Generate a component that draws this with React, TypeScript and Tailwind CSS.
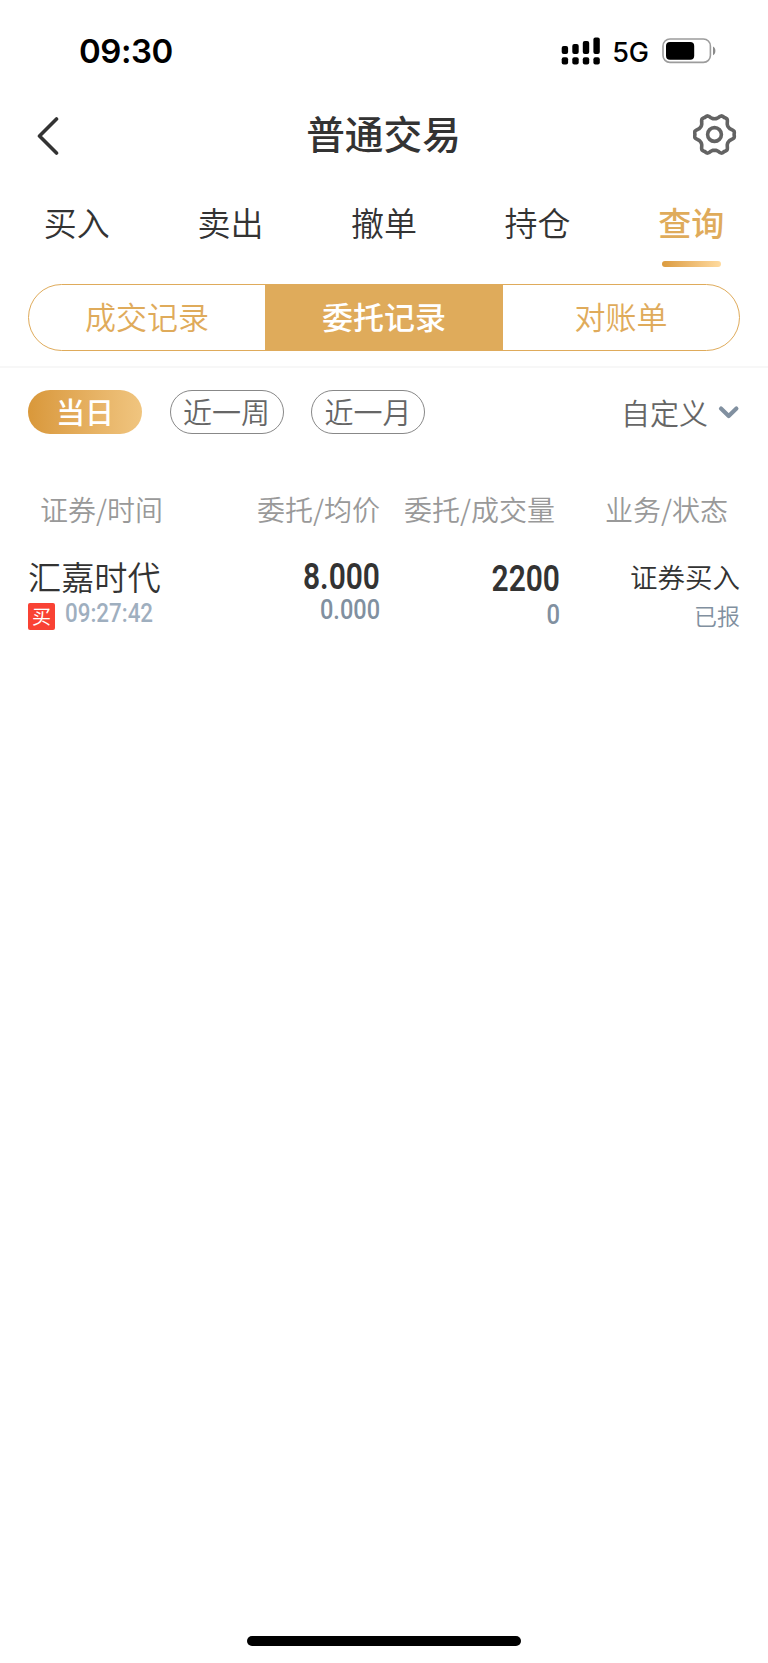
import clsx from 'clsx';

const tabs = ['买入', '卖出', '撤单', '持仓', '查询'];
const segments = ['成交记录', '委托记录', '对账单'];
const ranges = ['当日', '近一周', '近一月'];

// Half a lobe of the settings icon as [degrees, radius], mirrored six times
const lobe = [[0, 19.6], [5, 19.9], [9, 19.9], [12, 19.2], [15, 18.2], [18, 17.2], [21, 16.4], [25, 15.9], [30, 15.7]];
const fullLobe = [...lobe.slice(1, -1).reverse().map(([deg, r]) => [-deg, r]), ...lobe];
const gearPoints = [0, 60, 120, 180, 240, 300]
  .flatMap((base) =>
    fullLobe.map(([deg, r]) => {
      const angle = ((base + deg) * Math.PI) / 180;
      return `${(r * Math.cos(angle)).toFixed(2)},${(r * Math.sin(angle)).toFixed(2)}`;
    })
  )
  .join(' ');

const GearIcon = () => (
  <svg width="44" height="44" viewBox="-21.5 -21.5 44 44" fill="none" stroke="#636363" strokeWidth="3.6">
    <polygon points={gearPoints} strokeLinejoin="round" />
    <circle r="6.9" />
  </svg>
);

const SignalIcon = () => (
  <svg width="40" height="28" viewBox="0 0 40 28">
    <rect x="0.7" y="9" width="6.4" height="8" rx="2" />
    <rect x="11.3" y="7" width="6.4" height="10" rx="2" />
    <rect x="21.8" y="4" width="6.4" height="13" rx="2" />
    <rect x="32.4" y="0.6" width="6.4" height="16.4" rx="2" />
    <rect x="0.7" y="20.2" width="6.4" height="7.2" rx="2" />
    <rect x="11.3" y="20.2" width="6.4" height="7.2" rx="2" />
    <rect x="21.8" y="20.2" width="6.4" height="7.2" rx="2" />
    <rect x="32.4" y="20.2" width="6.4" height="7.2" rx="2" />
  </svg>
);

const BatteryIcon = () => (
  <svg width="56" height="26" viewBox="0 0 56 26">
    <rect x="1" y="1" width="47.4" height="23.4" rx="7" fill="none" stroke="#9c9c9c" strokeWidth="1.6" />
    <rect x="4" y="4" width="28.2" height="17.8" rx="4" />
    <path d="M51 8.6c3.2 1.2 3.2 7.4 0 8.6z" fill="#8a8a8a" />
  </svg>
);

const StatusBar = () => (
  <div className="flex h-[100px] justify-between pl-[79px] pr-[50px] pt-[37px] font-['Inter'] text-black">
    <div className="h-7 text-[33px] font-semibold leading-7 tracking-[-0.5px]">09:30</div>
    <div className="flex h-7">
      <SignalIcon />
      <span className="mr-[13px] pl-[11px] pt-px text-[27px] font-medium leading-[30px]">5G</span>
      <div className="pt-px">
        <BatteryIcon />
      </div>
    </div>
  </div>
);

const Header = () => (
  <header className="flex h-[70px] items-center justify-between pl-[37px] pr-[31px] pt-px">
    <svg width="38" height="40" viewBox="0 0 38 40" fill="none" stroke="#333" strokeWidth="3.6" strokeLinecap="round" strokeLinejoin="round">
      <path d="M19.5 3 2.5 20l17 17" />
    </svg>
    <h1 className="pb-[8px] pr-px text-[38.7px] font-medium leading-[60px] text-[#333]">普通交易</h1>
    <div className="pb-px">
      <GearIcon />
    </div>
  </header>
);

const Tabs = () => (
  <nav className="grid h-[114px] grid-cols-5 pt-[27px] text-center text-[33px] leading-[50px] text-[#333]">
    {tabs.map((tab) => (
      <div key={tab} className={clsx(tab === '查询' ? 'font-medium text-[#dfab5b]' : 'font-[350]')}>
        {tab}
        {tab === '查询' && (
          <div className="mx-auto mt-[14px] h-1.5 w-[59px] rounded-full bg-linear-to-r from-[#db9b3d] to-[#ffdb9f]" />
        )}
      </div>
    ))}
  </nav>
);

const Segments = () => (
  <div className="mx-7 grid h-[67px] grid-cols-[236px_238px_236px] overflow-hidden rounded-full border border-[#dfab5b] text-center text-[31px] leading-[62px] text-[#dfab5b]">
    {segments.map((segment, i) => (
      <div key={segment} className={clsx(i === 1 ? 'bg-[#dfab5b] font-medium text-white' : 'font-[350]')}>
        {segment}
      </div>
    ))}
  </div>
);

const Filters = () => (
  <div className="mt-[15px] flex items-start justify-between border-t-2 border-[#f7f7f7] px-7 pt-[22px] text-[29px] text-[#666]">
    <div className="flex gap-[27.5px]">
      {ranges.map((range, i) => (
        <div
          key={range}
          className={clsx(
            'h-[44px] w-[114px] rounded-full text-center',
            i === 0
              ? 'bg-linear-to-r from-[#d9983a] to-[#f0c57f] font-medium leading-[42px] text-white'
              : 'border border-[#888] font-[350] leading-[40px]'
          )}
        >
          {range}
        </div>
      ))}
    </div>
    <div className="flex items-center gap-[10px] font-[350] leading-[44px]">
      自定义
      <svg width="22" height="14" viewBox="0 0 22 14" fill="none" stroke="#8190a0" strokeWidth="4.2" strokeLinecap="round" strokeLinejoin="round">
        <path d="m3 3.6 7.7 7.4 7.7-7.4" />
      </svg>
    </div>
  </div>
);

// Condensed digits
const Num = ({ children, className }: { children: string; className: string }) => (
  <div className={clsx("font-['Roboto'] whitespace-nowrap", className)}>{children}</div>
);

const Orders = () => (
  <section>
    <div className="mt-[55px] flex h-[42px] pl-[40px] pt-px text-[28px] font-[350] leading-[39px] text-[#999]">
      <div className="w-[217px]">证券/时间</div>
      <div className="w-[147px]">委托/均价</div>
      <div className="w-[201px]">委托/成交量</div>
      <div>业务/状态</div>
    </div>
    <div className="flex px-7 pt-[21px] text-[#333]">
      <div className="w-[180px]">
        <div className="text-[33.2px] font-[350] leading-[48px]">汇嘉时代</div>
        <div className="flex pt-[3px]">
          <span className="size-[27px] rounded-[2px] bg-[#f94234] text-center text-[19px] leading-[26px] text-white">买</span>
          <Num className="ml-[10px] origin-left scale-x-[0.86] text-[26px] font-medium leading-[21px] text-[#9fafbf]">09:27:42</Num>
        </div>
      </div>
      <div className="w-[172px] pt-px text-right">
        <Num className="origin-right scale-x-[0.81] text-[37px] font-semibold leading-[47px]">8.000</Num>
        <Num className="-mt-px origin-right scale-x-[0.84] text-[28px] font-medium leading-[22px] text-[#8190a0]">0.000</Num>
      </div>
      <div className="w-[180px] pt-[4px] text-right">
        <Num className="origin-right scale-x-[0.81] text-[37px] font-semibold leading-[46px]">2200</Num>
        <Num className="origin-right scale-x-[0.85] pt-[2px] text-[28px] font-medium leading-[22px] text-[#8190a0]">0</Num>
      </div>
      <div className="flex-1 text-right">
        <div className="text-[27.5px] font-[350] leading-[48px]">证券买入</div>
        <div className="-mt-px text-[23px] font-[350] leading-[32px] text-[#8190a0]">已报</div>
      </div>
    </div>
  </section>
);

function App() {
  return (
    <div className="flex h-[1663px] w-[768px] flex-col bg-white font-['Noto_Sans_CJK_SC',sans-serif]">
      <StatusBar />
      <Header />
      <Tabs />
      <Segments />
      <Filters />
      <Orders />
      <div className="mx-auto mb-[17px] mt-auto h-2.5 w-[274px] rounded-full bg-black" />
    </div>
  );
}

export default App;
